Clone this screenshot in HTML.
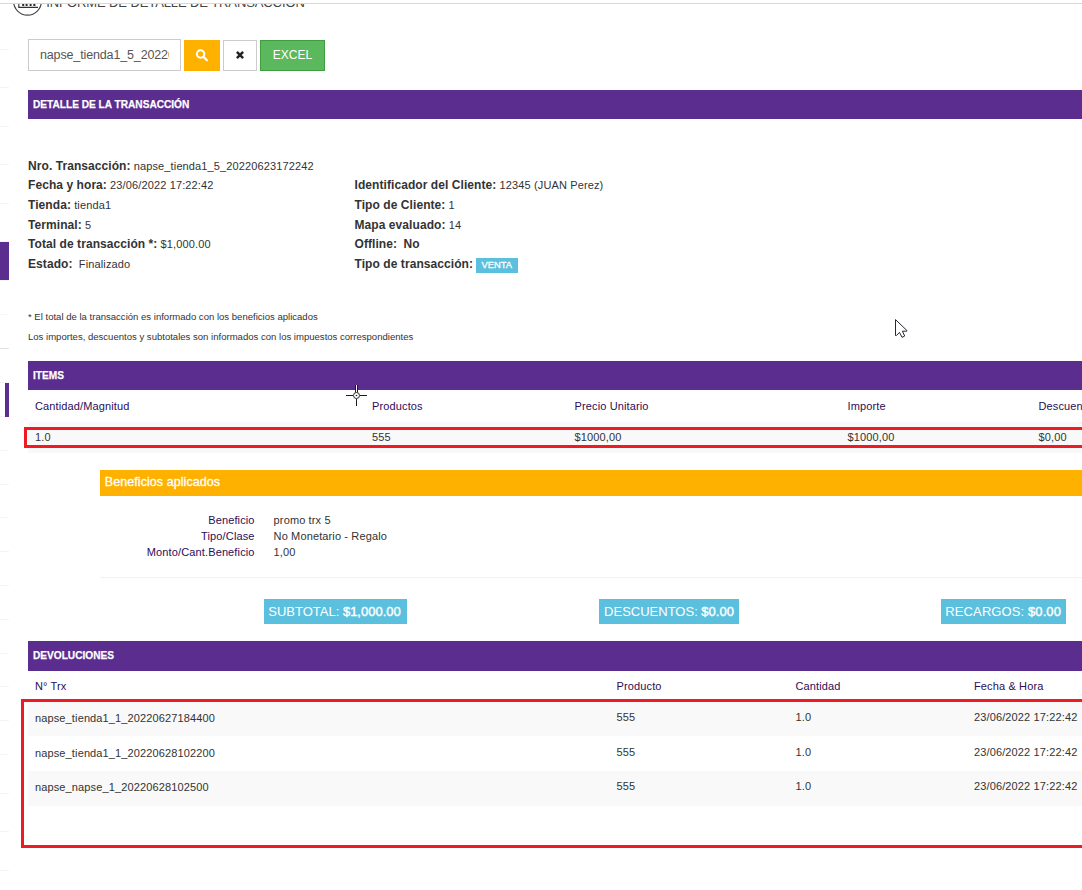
<!DOCTYPE html>
<html lang="es">
<head>
<meta charset="utf-8">
<title>Informe de detalle de transacción</title>
<style>
*{box-sizing:border-box;margin:0;padding:0}
html,body{width:1082px;height:890px;overflow:hidden;background:#fff}
body{position:relative;font-family:"Liberation Sans",sans-serif;font-size:11px;color:#333;line-height:1}
.abs{position:absolute;white-space:nowrap}
.bar{position:absolute;left:28px;right:0;background:#5b2d8e;color:#fff;font-weight:bold;font-size:11.5px}
.bar span{position:absolute;left:4.6px;display:inline-block;transform-origin:0 50%;transform:scaleX(.88);-webkit-text-stroke:.25px #fff}
.sl{position:absolute;left:0;width:9px;height:1px;background:#f4f4f4}
.row{position:absolute;left:28px;height:20px;line-height:20px;white-space:nowrap;font-size:11px;letter-spacing:.13px}
.row b{font-size:12px;letter-spacing:.07px}
.th{position:absolute;white-space:nowrap;color:#2c0d57;font-size:11px;letter-spacing:.13px}
.td{position:absolute;white-space:nowrap;color:#333;font-size:11px;letter-spacing:.13px}
.lbl{position:absolute;top:599px;height:25px;line-height:25px;background:#5bc0de;color:#fff;font-size:13px;white-space:nowrap;text-align:center}
.lbl b{font-weight:normal;-webkit-text-stroke:.4px #fff}
</style>
</head>
<body>

<!-- page title (clipped by header) -->
<svg class="abs" style="left:10px;top:0" width="36" height="20" viewBox="0 0 36 20"><circle cx="17.5" cy="1.3" r="13.9" fill="none" stroke="#444" stroke-width="1.2"/><path d="M8.8 0V7.4H28" fill="none" stroke="#333" stroke-width="1.1"/><path d="M12.2 6V0h2v6zM15.6 6V0h2v6zM19.6 6V0h2v6zM23.3 6V0h2.1v6z" fill="#2a2a3a"/></svg>
<div class="abs" style="left:46.3px;top:-5.5px;font-size:13px;letter-spacing:-.1px;line-height:16px;color:#444">INFORME DE DETALLE DE TRANSACCIÓN</div>
<div class="abs" style="left:0;top:0;width:1082px;height:4px;background:#fff;border-bottom:1px solid #d9d9d9"></div>

<!-- left sidebar remnants -->
<div class="sl" style="top:49px"></div>
<div class="sl" style="top:87px"></div>
<div class="sl" style="top:126px"></div>
<div class="sl" style="top:164px"></div>
<div class="sl" style="top:203px"></div>
<div class="sl" style="top:241px"></div>
<div class="sl" style="top:280px"></div>
<div class="sl" style="top:314px;background:#f7f7f7"></div>
<div class="sl" style="top:348px;background:#e2e2e2"></div>
<div class="sl" style="top:382px"></div>
<div class="sl" style="top:416px"></div>
<div class="sl" style="top:450px"></div>
<div class="sl" style="top:484px"></div>
<div class="sl" style="top:517px"></div>
<div class="sl" style="top:551px"></div>
<div class="sl" style="top:585px"></div>
<div class="sl" style="top:619px"></div>
<div class="sl" style="top:653px"></div>
<div class="sl" style="top:686px"></div>
<div class="sl" style="top:720px"></div>
<div class="sl" style="top:754px"></div>
<div class="sl" style="top:793px"></div>
<div class="sl" style="top:831px"></div>
<div class="sl" style="top:870px"></div>
<div class="abs" style="left:0;top:242px;width:9px;height:38px;background:#5b2d8e"></div>
<div class="abs" style="left:5px;top:383px;width:4px;height:34px;background:#5b2d8e"></div>

<!-- search bar -->
<div class="abs" style="left:28px;top:39px;width:153px;height:32px;border:1px solid #ccc;background:#fff;font-size:12.5px;letter-spacing:-.14px;line-height:30px;padding:0 10px 0 11px;color:#555"><div style="overflow:hidden;width:129.3px;height:30px">napse_tienda1_5_20220623172242</div></div>
<div class="abs" style="left:184px;top:40px;width:36px;height:31px;background:#ffb100">
<svg width="36" height="31" viewBox="0 0 36 31"><circle cx="16.6" cy="14" r="3.7" fill="none" stroke="#fff" stroke-width="2.1"/><path d="M19.7 17.1l3.2 3.1" stroke="#fff" stroke-width="2.1" stroke-linecap="round"/></svg>
</div>
<div class="abs" style="left:223px;top:40px;width:34px;height:31px;background:#fff;border:1px solid #ccc">
<svg width="32" height="29" viewBox="0 0 32 29"><path d="M12.9 10.9l6.2 6.2M19.1 10.9l-6.2 6.2" stroke="#222" stroke-width="2.5"/></svg>
</div>
<div class="abs" style="left:260px;top:40px;width:65px;height:31px;background:#5cb85c;border:1px solid #3f9d3f;color:#fff;font-size:12px;line-height:28px;text-align:center">EXCEL</div>

<!-- detalle -->
<div class="bar" style="top:90px;height:29px;line-height:29px"><span>DETALLE DE LA TRANSACCIÓN</span></div>

<div class="row" style="top:156px"><b>Nro. Transacción:</b> napse_tienda1_5_20220623172242</div>
<div class="row" style="top:175px"><b>Fecha y hora:</b> 23/06/2022 17:22:42</div>
<div class="row" style="top:195px"><b>Tienda:</b> tienda1</div>
<div class="row" style="top:215.4px"><b>Terminal:</b> 5</div>
<div class="row" style="top:234px"><b>Total de transacción *:</b> $1,000.00</div>
<div class="row" style="top:253.6px"><b>Estado:</b>&nbsp; Finalizado</div>

<div class="row" style="left:354.5px;top:175px"><b>Identificador del Cliente:</b> 12345 (JUAN Perez)</div>
<div class="row" style="left:354.5px;top:195px"><b>Tipo de Cliente:</b> 1</div>
<div class="row" style="left:354.5px;top:215.4px"><b>Mapa evaluado:</b> 14</div>
<div class="row" style="left:354.5px;top:234px"><b>Offline:</b>&nbsp; <b>No</b></div>
<div class="row" style="left:354.5px;top:253.6px"><b>Tipo de transacción:</b> <span style="display:inline-block;vertical-align:top;margin-top:4.4px;margin-left:-.5px;width:42px;height:15px;line-height:13.4px;background:#5bc0de;color:#fff;font-size:9.4px;-webkit-text-stroke:.3px #fff;text-align:center;letter-spacing:-.05px">VENTA</span></div>

<div class="abs" style="left:28px;top:311px;font-size:9.55px;line-height:12px;color:#333">* El total de la transacción es informado con los beneficios aplicados</div>
<div class="abs" style="left:28px;top:331px;font-size:9.55px;line-height:12px;color:#333">Los importes, descuentos y subtotales son informados con los impuestos correspondientes</div>

<!-- items -->
<div class="bar" style="top:361px;height:29px;line-height:29px"><span>ITEMS</span></div>
<div class="th" style="left:35px;top:400px;line-height:12px">Cantidad/Magnitud</div>
<div class="th" style="left:372px;top:400px;line-height:12px">Productos</div>
<div class="th" style="left:574.5px;top:400px;line-height:12px">Precio Unitario</div>
<div class="th" style="left:847.5px;top:400px;line-height:12px">Importe</div>
<div class="th" style="left:1038.5px;top:400px;line-height:12px">Descuento</div>
<div class="abs" style="left:28px;top:422px;right:0;height:31px;background:#f9f9f9"></div>
<div class="abs" style="left:24px;top:427px;width:1070px;height:21px;border:3px solid #ed1c24"></div>
<div class="td" style="left:35px;top:431px;line-height:12px">1.0</div>
<div class="td" style="left:372px;top:431px;line-height:12px">555</div>
<div class="td" style="left:574.5px;top:431px;line-height:12px">$1000,00</div>
<div class="td" style="left:847.5px;top:431px;line-height:12px">$1000,00</div>
<div class="td" style="left:1038.5px;top:431px;line-height:12px">$0,00</div>

<!-- beneficios -->
<div class="abs" style="left:99px;top:470px;right:-10px;height:106.8px;box-shadow:0 1px 1px rgba(0,0,0,.06);border-radius:0 0 0 3px"></div>
<div class="abs" style="left:100px;top:470px;right:0;height:26px;line-height:25.6px;background:#ffb100;color:#fff;font-size:12.5px;padding-left:4.8px;letter-spacing:.07px;-webkit-text-stroke:.3px #fff">Beneficios aplicados</div>
<div class="td" style="left:99.6px;width:155px;text-align:right;top:513.5px;line-height:12px;color:#2c0d57">Beneficio</div>
<div class="td" style="left:99.6px;width:155px;text-align:right;top:529.5px;line-height:12px;color:#2c0d57">Tipo/Clase</div>
<div class="td" style="left:99.6px;width:155px;text-align:right;top:545.5px;line-height:12px;color:#2c0d57">Monto/Cant.Beneficio</div>
<div class="td" style="left:273.6px;top:513.5px;line-height:12px">promo trx 5</div>
<div class="td" style="left:273.6px;top:529.5px;line-height:12px">No Monetario - Regalo</div>
<div class="td" style="left:273.6px;top:545.5px;line-height:12px">1,00</div>

<!-- totals -->
<div class="lbl" style="left:264px;width:143px;padding-right:2px">SUBTOTAL: <b>$1,000.00</b></div>
<div class="lbl" style="left:599px;width:140px">DESCUENTOS: <b>$0.00</b></div>
<div class="lbl" style="left:941px;width:125px;letter-spacing:.1px;padding-right:.6px">RECARGOS: <b>$0.00</b></div>

<!-- devoluciones -->
<div class="bar" style="top:641px;height:30px;line-height:28px"><span>DEVOLUCIONES</span></div>
<div class="th" style="left:35px;top:680px;line-height:12px">N° Trx</div>
<div class="th" style="left:616.5px;top:680px;line-height:12px">Producto</div>
<div class="th" style="left:795.5px;top:680px;line-height:12px">Cantidad</div>
<div class="th" style="left:974px;top:680px;line-height:12px">Fecha &amp; Hora</div>

<div class="abs" style="left:28px;top:700.5px;right:0;height:35px;background:#f9f9f9"></div>
<div class="abs" style="left:28px;top:770.5px;right:0;height:35px;background:#f9f9f9"></div>
<div class="abs" style="left:21px;top:699px;width:1073px;height:149px;border:3px solid #ed1c24"></div>

<div class="td" style="left:35px;top:712px;line-height:12px">napse_tienda1_1_20220627184400</div>
<div class="td" style="left:616.5px;top:711px;line-height:12px">555</div>
<div class="td" style="left:795.5px;top:711px;line-height:12px">1.0</div>
<div class="td" style="left:974px;top:711px;line-height:12px">23/06/2022 17:22:42</div>

<div class="td" style="left:35px;top:747px;line-height:12px">napse_tienda1_1_20220628102200</div>
<div class="td" style="left:616.5px;top:746px;line-height:12px">555</div>
<div class="td" style="left:795.5px;top:746px;line-height:12px">1.0</div>
<div class="td" style="left:974px;top:746px;line-height:12px">23/06/2022 17:22:42</div>

<div class="td" style="left:35px;top:781px;line-height:12px">napse_napse_1_20220628102500</div>
<div class="td" style="left:616.5px;top:780px;line-height:12px">555</div>
<div class="td" style="left:795.5px;top:780px;line-height:12px">1.0</div>
<div class="td" style="left:974px;top:780px;line-height:12px">23/06/2022 17:22:42</div>

<!-- cursors captured in screenshot -->
<svg class="abs" style="left:345px;top:384px" width="24" height="24" viewBox="0 0 24 24"><path d="M11.5 15v7M1 11.5h7M15 11.5h7" stroke="#1a1a1a" stroke-width="1" fill="none"/><path d="M10.5 1v7.5M12.5 1v7.5" stroke="#1a1a1a" stroke-width="1" fill="none"/><path d="M11.5 1v7" stroke="#fff" stroke-width="1" fill="none"/><circle cx="11.5" cy="11.5" r="3" fill="#fff" stroke="#222" stroke-width="1"/><circle cx="11.5" cy="11.5" r=".8" fill="#222"/></svg>
<svg class="abs" style="left:894px;top:319px" width="14" height="21" viewBox="0 0 14 21"><path d="M1.5 .6V16.5H2.4L5.5 13.4 8 18.3 10.7 17 8.4 12.2H12.8V11.4Z" fill="#fff" stroke="#1c1c28" stroke-width=".95" stroke-linejoin="round"/></svg>

</body>
</html>
